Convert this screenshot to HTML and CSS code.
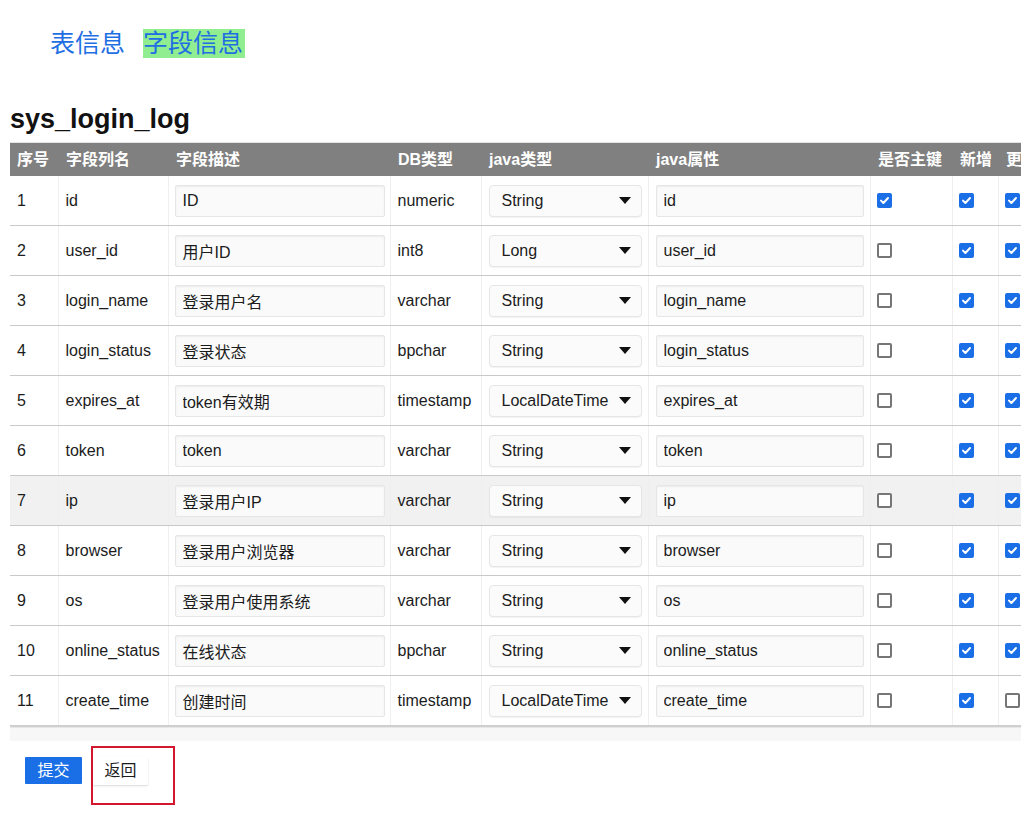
FILE: index.html
```html
<!DOCTYPE html>
<html lang="zh">
<head>
<meta charset="utf-8">
<title>sys_login_log 字段信息</title>
<link rel="stylesheet" href="styles.css">
</head>
<body>
<div class="page">
  <div class="tabs">
    <span class="tab">表信息</span>
    <span class="tab active">字段信息</span>
  </div>
  <h2 class="title">sys_login_log</h2>
  <div class="table-wrap">
    <table class="grid">
      <colgroup>
        <col class="c-no"><col class="c-col"><col class="c-desc"><col class="c-db"><col class="c-jt"><col class="c-jp"><col class="c-pk"><col class="c-add"><col class="c-upd">
      </colgroup>
      <thead>
        <tr><th>序号</th><th>字段列名</th><th>字段描述</th><th>DB类型</th><th>java类型</th><th>java属性</th><th>是否主键</th><th>新增</th><th>更新</th></tr>
      </thead>
      <tbody>
        <tr><td>1</td><td>id</td><td><input class="txt" value="ID"></td><td>numeric</td><td><div class="sel"><span>String</span><svg class="arr" width="12" height="7" viewBox="0 0 12 7"><path d="M0 0H12L6 7Z"/></svg></div></td><td><input class="txt" value="id"></td><td><span class="cb on"><svg viewBox="0 0 15 15"><path d="M4 7.6L6.4 10 11 5"/></svg></span></td><td><span class="cb on"><svg viewBox="0 0 15 15"><path d="M4 7.6L6.4 10 11 5"/></svg></span></td><td><span class="cb on"><svg viewBox="0 0 15 15"><path d="M4 7.6L6.4 10 11 5"/></svg></span></td></tr>
        <tr><td>2</td><td>user_id</td><td><input class="txt" value="用户ID"></td><td>int8</td><td><div class="sel"><span>Long</span><svg class="arr" width="12" height="7" viewBox="0 0 12 7"><path d="M0 0H12L6 7Z"/></svg></div></td><td><input class="txt" value="user_id"></td><td><span class="cb"></span></td><td><span class="cb on"><svg viewBox="0 0 15 15"><path d="M4 7.6L6.4 10 11 5"/></svg></span></td><td><span class="cb on"><svg viewBox="0 0 15 15"><path d="M4 7.6L6.4 10 11 5"/></svg></span></td></tr>
        <tr><td>3</td><td>login_name</td><td><input class="txt" value="登录用户名"></td><td>varchar</td><td><div class="sel"><span>String</span><svg class="arr" width="12" height="7" viewBox="0 0 12 7"><path d="M0 0H12L6 7Z"/></svg></div></td><td><input class="txt" value="login_name"></td><td><span class="cb"></span></td><td><span class="cb on"><svg viewBox="0 0 15 15"><path d="M4 7.6L6.4 10 11 5"/></svg></span></td><td><span class="cb on"><svg viewBox="0 0 15 15"><path d="M4 7.6L6.4 10 11 5"/></svg></span></td></tr>
        <tr><td>4</td><td>login_status</td><td><input class="txt" value="登录状态"></td><td>bpchar</td><td><div class="sel"><span>String</span><svg class="arr" width="12" height="7" viewBox="0 0 12 7"><path d="M0 0H12L6 7Z"/></svg></div></td><td><input class="txt" value="login_status"></td><td><span class="cb"></span></td><td><span class="cb on"><svg viewBox="0 0 15 15"><path d="M4 7.6L6.4 10 11 5"/></svg></span></td><td><span class="cb on"><svg viewBox="0 0 15 15"><path d="M4 7.6L6.4 10 11 5"/></svg></span></td></tr>
        <tr><td>5</td><td>expires_at</td><td><input class="txt" value="token有效期"></td><td>timestamp</td><td><div class="sel"><span>LocalDateTime</span><svg class="arr" width="12" height="7" viewBox="0 0 12 7"><path d="M0 0H12L6 7Z"/></svg></div></td><td><input class="txt" value="expires_at"></td><td><span class="cb"></span></td><td><span class="cb on"><svg viewBox="0 0 15 15"><path d="M4 7.6L6.4 10 11 5"/></svg></span></td><td><span class="cb on"><svg viewBox="0 0 15 15"><path d="M4 7.6L6.4 10 11 5"/></svg></span></td></tr>
        <tr><td>6</td><td>token</td><td><input class="txt" value="token"></td><td>varchar</td><td><div class="sel"><span>String</span><svg class="arr" width="12" height="7" viewBox="0 0 12 7"><path d="M0 0H12L6 7Z"/></svg></div></td><td><input class="txt" value="token"></td><td><span class="cb"></span></td><td><span class="cb on"><svg viewBox="0 0 15 15"><path d="M4 7.6L6.4 10 11 5"/></svg></span></td><td><span class="cb on"><svg viewBox="0 0 15 15"><path d="M4 7.6L6.4 10 11 5"/></svg></span></td></tr>
        <tr class="hover"><td>7</td><td>ip</td><td><input class="txt" value="登录用户IP"></td><td>varchar</td><td><div class="sel"><span>String</span><svg class="arr" width="12" height="7" viewBox="0 0 12 7"><path d="M0 0H12L6 7Z"/></svg></div></td><td><input class="txt" value="ip"></td><td><span class="cb"></span></td><td><span class="cb on"><svg viewBox="0 0 15 15"><path d="M4 7.6L6.4 10 11 5"/></svg></span></td><td><span class="cb on"><svg viewBox="0 0 15 15"><path d="M4 7.6L6.4 10 11 5"/></svg></span></td></tr>
        <tr><td>8</td><td>browser</td><td><input class="txt" value="登录用户浏览器"></td><td>varchar</td><td><div class="sel"><span>String</span><svg class="arr" width="12" height="7" viewBox="0 0 12 7"><path d="M0 0H12L6 7Z"/></svg></div></td><td><input class="txt" value="browser"></td><td><span class="cb"></span></td><td><span class="cb on"><svg viewBox="0 0 15 15"><path d="M4 7.6L6.4 10 11 5"/></svg></span></td><td><span class="cb on"><svg viewBox="0 0 15 15"><path d="M4 7.6L6.4 10 11 5"/></svg></span></td></tr>
        <tr><td>9</td><td>os</td><td><input class="txt" value="登录用户使用系统"></td><td>varchar</td><td><div class="sel"><span>String</span><svg class="arr" width="12" height="7" viewBox="0 0 12 7"><path d="M0 0H12L6 7Z"/></svg></div></td><td><input class="txt" value="os"></td><td><span class="cb"></span></td><td><span class="cb on"><svg viewBox="0 0 15 15"><path d="M4 7.6L6.4 10 11 5"/></svg></span></td><td><span class="cb on"><svg viewBox="0 0 15 15"><path d="M4 7.6L6.4 10 11 5"/></svg></span></td></tr>
        <tr><td>10</td><td>online_status</td><td><input class="txt" value="在线状态"></td><td>bpchar</td><td><div class="sel"><span>String</span><svg class="arr" width="12" height="7" viewBox="0 0 12 7"><path d="M0 0H12L6 7Z"/></svg></div></td><td><input class="txt" value="online_status"></td><td><span class="cb"></span></td><td><span class="cb on"><svg viewBox="0 0 15 15"><path d="M4 7.6L6.4 10 11 5"/></svg></span></td><td><span class="cb on"><svg viewBox="0 0 15 15"><path d="M4 7.6L6.4 10 11 5"/></svg></span></td></tr>
        <tr><td>11</td><td>create_time</td><td><input class="txt" value="创建时间"></td><td>timestamp</td><td><div class="sel"><span>LocalDateTime</span><svg class="arr" width="12" height="7" viewBox="0 0 12 7"><path d="M0 0H12L6 7Z"/></svg></div></td><td><input class="txt" value="create_time"></td><td><span class="cb"></span></td><td><span class="cb on"><svg viewBox="0 0 15 15"><path d="M4 7.6L6.4 10 11 5"/></svg></span></td><td><span class="cb"></span></td></tr>
      </tbody>
    </table>
  </div>
  <div class="scroll-track"></div>
  <div class="actions">
    <button class="btn primary">提交</button>
    <div class="marked"><button class="btn plain">返回</button></div>
  </div>
</div>
</body>
</html>
```

FILE: styles.css
```css
html, body {
  margin: 0;
  padding: 0;
  background: #ffffff;
}
body {
  font-family: "Liberation Sans", "Noto Sans CJK SC", sans-serif;
  font-size: 16px;
  color: #1c1c1c;
}
.page {
  padding: 0 10px;
}
.tabs {
  padding: 29px 0 0 40px;
  display: flex;
  gap: 18px;
  font-size: 25px;
  line-height: 29px;
  height: 29px;
}
.tab {
  color: #1f6fe3;
}
.tab.active {
  background: #90ee90;
  padding: 0 2px 0 0;
}
.title {
  margin: 45px 0 7px 0;
  font-size: 27px;
  line-height: 32px;
  font-weight: bold;
  color: #111;
}
.table-wrap {
  overflow: hidden;
  width: 1011px;
}
.grid {
  border-collapse: collapse;
  table-layout: fixed;
  width: 1048px;
  border-top: 1px solid #e4e4e4;
}
.c-no { width: 48px; }
.c-col { width: 110px; }
.c-desc { width: 222px; }
.c-db { width: 91px; }
.c-jt { width: 167px; }
.c-jp { width: 222px; }
.c-pk { width: 82px; }
.c-add { width: 46px; }
.c-upd { width: 60px; }
.grid th {
  background: #808080;
  color: #ffffff;
  font-weight: bold;
  font-size: 16px;
  line-height: 20px;
  text-align: left;
  height: 33px;
  padding: 0 7px 0 8px;
  white-space: nowrap;
  overflow: hidden;
}
.grid th:first-child {
  padding-left: 7px;
}
.grid td {
  height: 49px;
  padding: 0 6px 0 7px;
  line-height: 20px;
  border-bottom: 1px solid #c9c9c9;
  border-left: 1px solid #efefef;
  white-space: nowrap;
  overflow: hidden;
  vertical-align: middle;
}
.grid td:first-child {
  border-left: none;
}
.grid tr.hover td {
  background: #f1f1f1;
}
.grid tbody tr:last-child td {
  border-bottom: 2px solid #cfcfcf;
}
.txt {
  display: block;
  box-sizing: border-box;
  width: 100%;
  height: 32px;
  margin: 0;
  padding: 0 7px;
  font-family: "Liberation Sans", "Noto Sans CJK SC", sans-serif;
  font-size: 16px;
  line-height: 20px;
  color: #1c1c1c;
  background: #fafafa;
  border: 1px solid #e6e6e6;
  border-radius: 2px;
  box-shadow: inset 0 1px 2px rgba(0,0,0,0.06);
  outline: none;
}
.grid td:nth-child(3) .txt {
  margin-left: -1px;
  width: calc(100% + 2px);
}
.sel {
  box-sizing: border-box;
  height: 32px;
  display: flex;
  align-items: center;
  justify-content: space-between;
  padding: 0 10px 0 12px;
  background: #fbfbfb;
  border: 1px solid #e6e6e6;
  border-radius: 4px;
  box-shadow: 0 1px 1px rgba(0,0,0,0.05);
  color: #1c1c1c;
}
.arr path {
  fill: #111;
}
.cb {
  display: block;
  box-sizing: border-box;
  width: 15px;
  height: 15px;
  margin-left: -1px;
  border: 2px solid #767676;
  border-radius: 2px;
  background: #fff;
}
.cb.on {
  border: none;
  background: #1b6fe6;
}
.cb svg {
  display: block;
  width: 15px;
  height: 15px;
}
.cb svg path {
  fill: none;
  stroke: #ffffff;
  stroke-width: 2;
  stroke-linecap: round;
  stroke-linejoin: round;
}
.scroll-track {
  width: 1011px;
  height: 13px;
  background: #f7f7f7;
  border-top: 1px solid #e8e8e8;
}
.actions {
  margin-top: 5px;
  padding-left: 15px;
  display: flex;
  align-items: flex-start;
  gap: 9px;
}
.btn {
  font-family: "Liberation Sans", "Noto Sans CJK SC", sans-serif;
  font-size: 16px;
  line-height: 20px;
  height: 27px;
  padding: 0 12px;
  border: none;
  border-radius: 1px;
  cursor: pointer;
}
.btn.primary {
  margin-top: 11px;
  width: 57px;
  padding: 0;
  background: #1a6fe6;
  color: #ffffff;
}
.btn.plain {
  width: 55px;
  height: 28px;
  padding: 0;
  background: #ffffff;
  color: #1c1c1c;
  box-shadow: 0 1px 2px rgba(0,0,0,0.15);
}
.marked {
  box-sizing: border-box;
  width: 84px;
  height: 59px;
  border: 2px solid #d3172e;
  padding: 9px 0 0 0;
}
```
